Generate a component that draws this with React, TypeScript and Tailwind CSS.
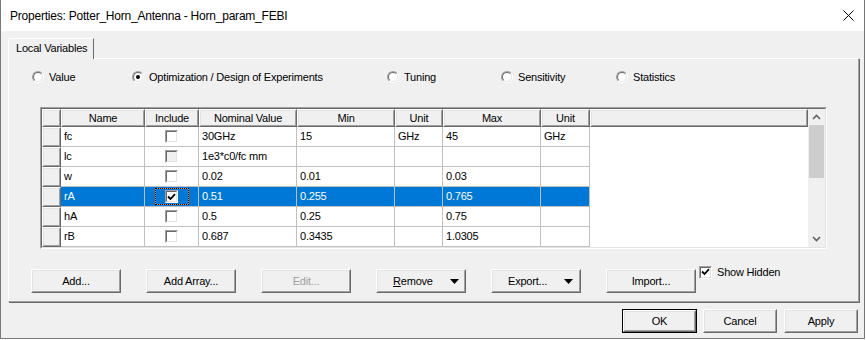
import React from 'react';

type Row = {
  name: string;
  include: 'off' | 'on' | 'disabled';
  nominal: string;
  min: string;
  unit: string;
  max: string;
  unit2: string;
  selected?: boolean;
};

const rows: Row[] = [
  { name: 'fc', include: 'off', nominal: '30GHz', min: '15', unit: 'GHz', max: '45', unit2: 'GHz' },
  { name: 'lc', include: 'disabled', nominal: '1e3*c0/fc mm', min: '', unit: '', max: '', unit2: '' },
  { name: 'w', include: 'off', nominal: '0.02', min: '0.01', unit: '', max: '0.03', unit2: '' },
  { name: 'rA', include: 'on', nominal: '0.51', min: '0.255', unit: '', max: '0.765', unit2: '', selected: true },
  { name: 'hA', include: 'off', nominal: '0.5', min: '0.25', unit: '', max: '0.75', unit2: '' },
  { name: 'rB', include: 'off', nominal: '0.687', min: '0.3435', unit: '', max: '1.0305', unit2: '' },
];

const Raised: React.FC<{ className?: string; innerClass?: string; children?: React.ReactNode }> = ({
  className = '',
  innerClass = '',
  children,
}) => (
  <div className={`border border-t-white border-l-white border-r-[#696969] border-b-[#696969] ${className}`}>
    <div
      className={`h-full w-full border border-t-[#e3e3e3] border-l-[#e3e3e3] border-r-[#a0a0a0] border-b-[#a0a0a0] bg-[#f0f0f0] ${innerClass}`}
    >
      {children}
    </div>
  </div>
);

const CheckMark = () => (
  <svg width="9" height="8" viewBox="0 0 9 8">
    <path d="M1 3.5 L3.5 6 L8 1.2" fill="none" stroke="black" strokeWidth="1.8" />
  </svg>
);

const CheckBox: React.FC<{ checked?: boolean; disabled?: boolean }> = ({ checked, disabled }) => (
  <div className="w-[13px] h-[13px] border border-t-[#a0a0a0] border-l-[#a0a0a0] border-r-white border-b-white">
    <div
      className={`h-full w-full border border-t-[#696969] border-l-[#696969] border-r-[#e3e3e3] border-b-[#e3e3e3] flex items-center justify-center ${
        disabled ? 'bg-[#f0f0f0]' : 'bg-white'
      }`}
    >
      {checked && <CheckMark />}
    </div>
  </div>
);

const Radio: React.FC<{ checked?: boolean; label: string; width: string }> = ({ checked, label, width }) => (
  <div className={`flex items-center gap-[5px] ${width}`}>
    <div className="w-[12px] h-[12px] rounded-full border border-t-[#a0a0a0] border-l-[#a0a0a0] border-r-white border-b-white">
      <div className="h-full w-full rounded-full border border-t-[#696969] border-l-[#696969] border-r-[#e3e3e3] border-b-[#e3e3e3] bg-white flex items-center justify-center">
        {checked && <div className="w-[4px] h-[4px] rounded-full bg-black" />}
      </div>
    </div>
    <span>{label}</span>
  </div>
);

const Arrow = () => (
  <svg width="9" height="5" viewBox="0 0 9 5">
    <polygon points="0,0 9,0 4.5,5" fill="black" />
  </svg>
);

const Button: React.FC<{ children: React.ReactNode; disabled?: boolean; className?: string }> = ({
  children,
  disabled,
  className = 'w-[90px] h-[24px]',
}) => (
  <Raised className={className} innerClass={`flex items-center justify-center ${disabled ? 'text-[#a0a0a0]' : ''}`}>
    {children}
  </Raised>
);

const HeadCell: React.FC<{ w: string; children?: React.ReactNode }> = ({ w, children }) => (
  <Raised className={`${w} h-[18px]`} innerClass="flex items-center justify-center">
    {children}
  </Raised>
);

const Cell: React.FC<{ w: string; sel?: boolean; children?: React.ReactNode }> = ({ w, sel, children }) => (
  <div
    className={`${w} h-[20px] border-r border-b border-[#c0c0c0] flex items-center pl-[3px] ${
      sel ? 'bg-[#0078d7] text-white' : 'bg-white'
    }`}
  >
    {children}
  </div>
);

const ScrollBar = () => (
  <div className="w-[17px] h-full bg-[#f0f0f0] flex flex-col">
    <div className="h-[16px] flex items-center justify-center">
      <svg width="9" height="6" viewBox="0 0 9 6">
        <path d="M1 5 L4.5 1.5 L8 5" fill="none" stroke="#606060" strokeWidth="1.6" />
      </svg>
    </div>
    <div className="mx-px h-[53px] bg-[#cdcdcd]" />
    <div className="flex-1" />
    <div className="h-[17px] flex items-center justify-center">
      <svg width="9" height="6" viewBox="0 0 9 6">
        <path d="M1 1 L4.5 4.5 L8 1" fill="none" stroke="#606060" strokeWidth="1.6" />
      </svg>
    </div>
  </div>
);

export default function App() {
  return (
    <div className="w-[865px] h-[339px] bg-[#f0f0f0] border-x border-b border-[#7a7a7a] font-['Liberation_Sans',Arial,sans-serif] text-[11px] tracking-[-0.2px] text-black flex flex-col">
      {/* title bar */}
      <div className="h-[31px] shrink-0 bg-white flex items-center justify-between pl-[9px] pr-[10px] text-[12px] tracking-[-0.22px]">
        <span>Properties: Potter_Horn_Antenna - Horn_param_FEBI</span>
        <svg width="11" height="11" viewBox="0 0 11 11">
          <path d="M0.5 0.5 L10.5 10.5 M10.5 0.5 L0.5 10.5" stroke="black" strokeWidth="1" />
        </svg>
      </div>

      <div className="pt-[7px] pl-[7px]">
        {/* tab */}
        <div className="relative z-10 -mb-px w-[86px] h-[21px] bg-[#f0f0f0] border-t border-l border-white border-r border-r-[#696969] rounded-tl-[2px] pl-[7px] flex items-center pb-px">
          Local Variables
        </div>

        {/* tab panel */}
        <div className="w-[851px] h-[244px] border-t border-l border-white border-r border-b border-r-[#a0a0a0] border-b-[#a0a0a0] shadow-[1px_1px_0_#696969]">
          <div className="mt-[12px] h-[12px] pl-[23px] flex items-center">
            <Radio label="Value" width="w-[100px]" />
            <Radio label="Optimization / Design of Experiments" width="w-[255px]" checked />
            <Radio label="Tuning" width="w-[114px]" />
            <Radio label="Sensitivity" width="w-[115px]" />
            <Radio label="Statistics" width="w-[120px]" />
          </div>

          {/* grid */}
          <div className="mt-[24px] ml-[31px] w-[787px] h-[142px] border border-t-[#a0a0a0] border-l-[#a0a0a0] border-r-white border-b-white">
            <div className="h-full w-full border border-t-[#696969] border-l-[#696969] border-r-[#e3e3e3] border-b-[#e3e3e3] flex bg-white">
              <div className="w-[766px] flex flex-col">
                <div className="flex">
                  <HeadCell w="w-[19px]" />
                  <HeadCell w="w-[84px]">Name</HeadCell>
                  <HeadCell w="w-[54px]">Include</HeadCell>
                  <HeadCell w="w-[98px]">Nominal Value</HeadCell>
                  <HeadCell w="w-[98px]">Min</HeadCell>
                  <HeadCell w="w-[48px]">Unit</HeadCell>
                  <HeadCell w="w-[98px]">Max</HeadCell>
                  <HeadCell w="w-[49px]">Unit</HeadCell>
                  <HeadCell w="w-[218px]" />
                </div>
                {rows.map((r) => (
                  <div key={r.name} className="flex h-[20px]">
                    <Raised className="w-[19px] h-[20px]" />
                    <Cell w="w-[84px]" sel={r.selected}>{r.name}</Cell>
                    <div
                      className={`w-[54px] h-[20px] border-r border-b border-[#c0c0c0] flex items-center justify-center ${
                        r.selected ? 'bg-[#0078d7]' : 'bg-white'
                      }`}
                    >
                      {r.selected ? (
                        <div className="w-[34px] h-[17px] bg-[#ff8c00] border border-dotted border-black">
                          <div className="h-full w-full bg-[#0078d7] flex items-center justify-center">
                            <CheckBox checked />
                          </div>
                        </div>
                      ) : (
                        <CheckBox disabled={r.include === 'disabled'} />
                      )}
                    </div>
                    <Cell w="w-[98px]" sel={r.selected}>{r.nominal}</Cell>
                    <Cell w="w-[98px]" sel={r.selected}>{r.min}</Cell>
                    <Cell w="w-[48px]" sel={r.selected}>{r.unit}</Cell>
                    <Cell w="w-[98px]" sel={r.selected}>{r.max}</Cell>
                    <Cell w="w-[49px]" sel={r.selected}>{r.unit2}</Cell>
                    <div className="w-[218px] bg-white" />
                  </div>
                ))}
              </div>
              <ScrollBar />
            </div>
          </div>

          {/* action buttons */}
          <div className="mt-[15px] ml-[22px] flex items-start">
            <div className="mt-[5px] flex gap-[25px]">
              <Button>Add...</Button>
              <Button>Add Array...</Button>
              <Button disabled>Edit...</Button>
              <Raised className="w-[90px] h-[24px]" innerClass="flex items-center justify-between pl-[15px] pr-[5px]">
                <span>
                  <span className="underline">R</span>emove
                </span>
                <Arrow />
              </Raised>
              <Raised className="w-[90px] h-[24px]" innerClass="flex items-center justify-between pl-[15px] pr-[6px]">
                <span>Export...</span>
                <Arrow />
              </Raised>
              <Button>Import...</Button>
            </div>
            <div className="ml-[3px] flex items-center gap-[5px]">
              <CheckBox checked />
              <span>Show Hidden</span>
            </div>
          </div>
        </div>

        {/* dialog buttons */}
        <div className="mt-[7px] pr-[6px] flex justify-end">
          <div className="border border-black w-[75px] h-[24px]">
            <Button className="w-full h-full">OK</Button>
          </div>
          <Button className="ml-[6px] w-[74px] h-[24px]">Cancel</Button>
          <Button className="ml-[7px] w-[74px] h-[24px]">Apply</Button>
        </div>
      </div>
    </div>
  );
}
